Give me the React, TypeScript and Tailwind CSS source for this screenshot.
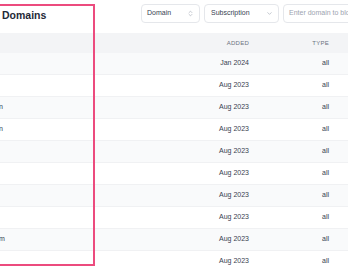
import { ChevronDown, ChevronsUpDown } from "lucide-react";

const rows = [
  { tail: "", added: "Jan 2024", type: "all" },
  { tail: "", added: "Aug 2023", type: "all" },
  { tail: "n", added: "Aug 2023", type: "all" },
  { tail: "n", added: "Aug 2023", type: "all" },
  { tail: "", added: "Aug 2023", type: "all" },
  { tail: "", added: "Aug 2023", type: "all" },
  { tail: "", added: "Aug 2023", type: "all" },
  { tail: "", added: "Aug 2023", type: "all" },
  { tail: "m", added: "Aug 2023", type: "all" },
  { tail: "", added: "Aug 2023", type: "all" },
];

export default function App() {
  return (
    <div className="relative w-[348px] h-[268px] overflow-hidden bg-white font-['Liberation_Sans',Arial,sans-serif]">
      <div className="w-[440px]">
        {/* HEADER */}
        <div className="flex items-center pt-[4px] mb-[10px]">
          <div className="w-[141px] shrink-0 pl-[2px] pt-[3px] text-[10.5px] leading-none font-bold text-[#1f2937]">
            Domains
          </div>
          <div className="w-[59px] shrink-0 h-[19px] flex items-center justify-between pl-[5px] pr-[5px] border border-[#e5e7eb] rounded-[4px] text-[7px] text-[#374151]">
            <span>Domain</span>
            <ChevronsUpDown size={7} className="text-[#9ca3af]" strokeWidth={2} />
          </div>
          <div className="w-[75px] shrink-0 ml-[4px] h-[19px] flex items-center justify-between pl-[6px] pr-[5px] border border-[#e5e7eb] rounded-[4px] text-[7px] text-[#374151]">
            <span>Subscription</span>
            <ChevronDown size={7} className="text-[#9ca3af]" strokeWidth={2} />
          </div>
          <div className="w-[153px] shrink-0 ml-[4px] h-[19px] flex items-center pl-[5px] border border-[#e5e7eb] rounded-[4px] text-[7px] text-[#9ca3af] whitespace-nowrap">
            Enter domain to block
          </div>
        </div>

        {/* TABLE */}
        <div className="grid grid-cols-[190px_60px_80px_1fr] h-[20px] items-center bg-[#f3f4f6] text-[6px] tracking-[0.04em] text-[#6b7280] uppercase">
          <div />
          <div className="text-right pr-[1px]">Added</div>
          <div className="text-right pr-[1px]">Type</div>
          <div />
        </div>
        {rows.map((r, i) => (
          <div
            key={i}
            className={`grid grid-cols-[190px_60px_80px_1fr] h-[22px] items-center border-b border-[#f0f1f3] text-[7px] text-[#374151] ${
              i % 2 === 0 ? "bg-[#f9fafb]" : "bg-white"
            }`}
          >
            <div className="-ml-[1px]">{r.tail}</div>
            <div className="text-right pr-[1px]">{r.added}</div>
            <div className="text-right pr-[1px]">{r.type}</div>
            <div />
          </div>
        ))}
      </div>

      {/* highlight box */}
      <div className="absolute left-[-4px] top-[4px] w-[99px] h-[262px] border-2 border-[#ec4b7e] pointer-events-none" />
    </div>
  );
}
